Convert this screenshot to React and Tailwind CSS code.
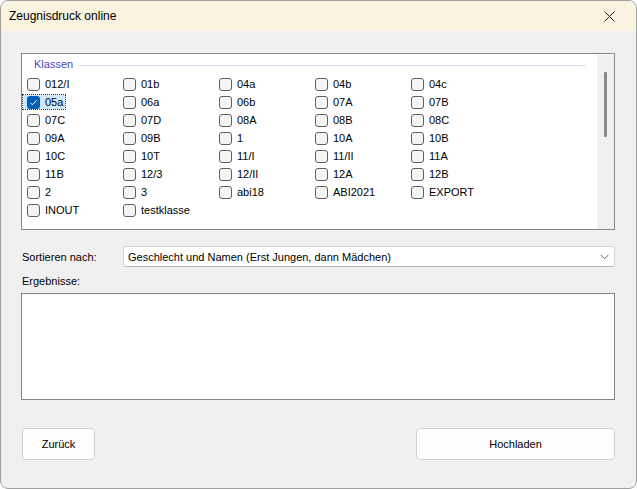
import React from "react";

const rows = [
  ["012/I", "01b", "04a", "04b", "04c"],
  ["05a", "06a", "06b", "07A", "07B"],
  ["07C", "07D", "08A", "08B", "08C"],
  ["09A", "09B", "1", "10A", "10B"],
  ["10C", "10T", "11/I", "11/II", "11A"],
  ["11B", "12/3", "12/II", "12A", "12B"],
  ["2", "3", "abi18", "ABI2021", "EXPORT"],
  ["INOUT", "testklasse"],
];

function Check({ label, checked }) {
  return (
    <div className="h-[18px] flex items-center">
      <div
        className={
          "flex items-center h-[14px] -ml-[4px] pl-[4px] pr-[2px] " +
          (checked ? "bg-[#cce8ff] outline outline-1 outline-dotted outline-[#333]" : "")
        }
      >
        {checked ? (
          <div className="w-[13px] h-[13px] rounded-[3px] bg-[#005fb8] flex items-center justify-center">
            <svg width="9" height="9" viewBox="0 0 9 9">
              <path d="M1.5 4.8 L3.5 6.8 L7.5 2.2" fill="none" stroke="#fff" strokeWidth="1" />
            </svg>
          </div>
        ) : (
          <div className="w-[13px] h-[13px] rounded-[3px] border border-[#5f5f5f] bg-[#f5f5f5]" />
        )}
        <span className="ml-[5px] text-[11px] leading-[13px] text-black">{label}</span>
      </div>
    </div>
  );
}

export default function App() {
  return (
    <div className="w-[637px] h-[489px] rounded-[8px] border border-[#a0a0a0] bg-[#f0f0f0] overflow-hidden flex flex-col font-['Liberation_Sans',sans-serif] text-black">
      <div className="h-[30px] shrink-0 bg-[#f9f3df] flex items-center justify-between pl-[8px] pr-[21px]">
        <span className="text-[12px] leading-[14px]">Zeugnisdruck online</span>
        <svg width="11" height="11" viewBox="0 0 11 11">
          <path d="M0.5 0.5 L10.5 10.5 M10.5 0.5 L0.5 10.5" stroke="#222" strokeWidth="1" />
        </svg>
      </div>

      <div className="flex flex-col px-[20px] pt-[22px]">
        {/* Class list box */}
        <div className="w-[594px] h-[177px] border border-[#828790] bg-white flex">
          <div className="flex-1 flex flex-col">
            <div className="h-[21px] flex items-center pl-[12px] pr-[11px]">
              <span className="text-[11px] leading-[13px] text-[#4b46c4]">Klassen</span>
              <div className="flex-1 h-[1px] bg-[#d5dcec] ml-[5px] mt-[1px]" />
            </div>
            <div className="grid grid-cols-[repeat(5,96px)] pl-[5px]">
              {rows.flat().map((l) => (
                <Check key={l} label={l} checked={l === "05a"} />
              ))}
            </div>
          </div>
          <div className="w-[17px] bg-[#f0f0f0] mt-[1px] flex justify-center">
            <div className="w-[3px] h-[65px] mt-[17px] bg-[#8a8a8a] rounded-[1px]" />
          </div>
        </div>

        {/* Sort row */}
        <div className="mt-[16px] flex items-center h-[21px]">
          <span className="w-[102px] pl-[1px] text-[11px] leading-[14px]">Sortieren nach:</span>
          <div className="w-[492px] h-[21px] bg-white border border-[#d4d4d4] border-b-[#b8b8b8] rounded-[3px] flex items-center justify-between pl-[4px] pr-[5px]">
            <span className="text-[11px] leading-[14px]">Geschlecht und Namen (Erst Jungen, dann Mädchen)</span>
            <svg width="9" height="6" viewBox="0 0 9 6">
              <path d="M0.5 0.8 L4.5 4.8 L8.5 0.8" fill="none" stroke="#666" strokeWidth="1" />
            </svg>
          </div>
        </div>

        <div className="mt-[7px] h-[14px] pl-[1px] text-[11px] leading-[14px]">Ergebnisse:</div>
        <div className="mt-[5px] w-[594px] h-[107px] border border-[#828282] bg-white" />

        {/* Buttons */}
        <div className="mt-[28px] flex justify-between pl-[1px] pr-[1px]">
          <button className="w-[73px] h-[32px] bg-[#fdfdfd] border border-[#d0d0d0] rounded-[4px] text-[11px]">
            Zurück
          </button>
          <button className="w-[199px] h-[32px] bg-[#fdfdfd] border border-[#d0d0d0] rounded-[4px] text-[11px]">
            Hochladen
          </button>
        </div>
      </div>
    </div>
  );
}
